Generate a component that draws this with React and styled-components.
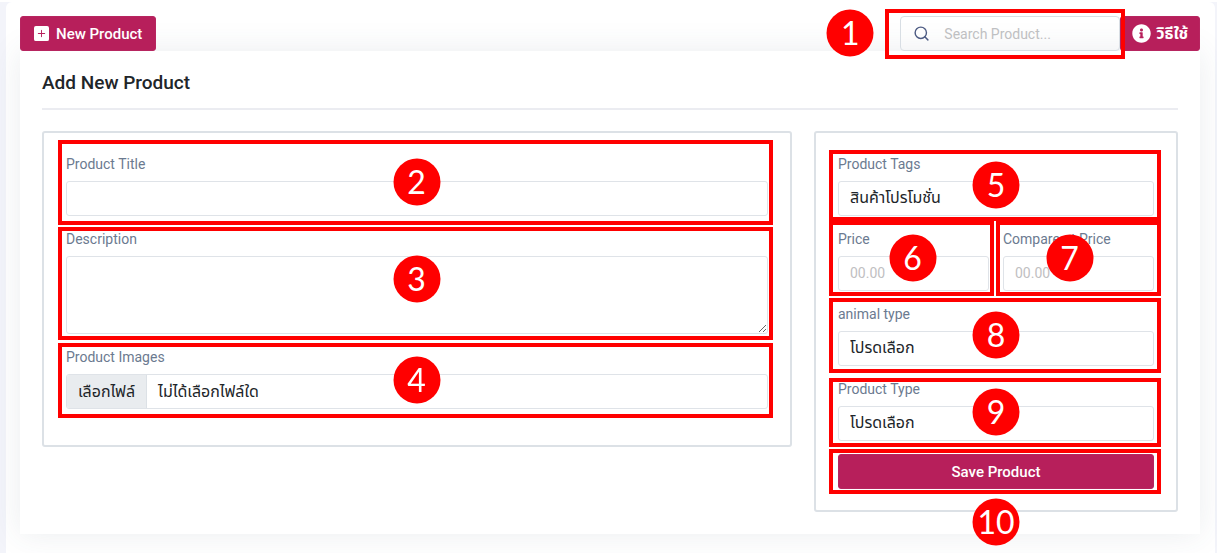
import React from "react";
import styled, { createGlobalStyle } from "styled-components";
import { BsPlusSquareFill } from "react-icons/bs";
import { FaInfoCircle } from "react-icons/fa";
import { FiSearch } from "react-icons/fi";

const GlobalStyle = createGlobalStyle`
  *, *::before, *::after { box-sizing: border-box; }
  body {
    margin: 0;
    background: #fff;
    color: #212529;
    font-family: Roboto, "Noto Sans Thai", "Noto Sans", "DejaVu Sans", sans-serif;
    font-size: 14px;
    line-height: 20px;
  }
  button, input, select, textarea { font: inherit; color: inherit; margin: 0; }
`;

const Page = styled.div`
  display: flex;
  min-height: 100vh;
  padding: 2px 2px 0 6px;
  background: linear-gradient(#fff 2px, #f3f4fa 2px);
`;

const Main = styled.main`
  flex: 1;
  min-width: 0;
  padding: 14px 15px 19px 14px;
  background: #fff;
  border-radius: 6px 6px 0 0;
`;

const Toolbar = styled.header`
  display: flex;
  justify-content: space-between;
`;

const ToolbarEnd = styled.div`
  display: flex;
`;

const Button = styled.button`
  display: flex;
  align-items: center;
  justify-content: center;
  gap: ${(p) => (p.$tight ? 5 : 7)}px;
  width: ${(p) => (p.$block ? "100%" : "auto")};
  height: 35px;
  padding: 0 ${(p) => (p.$tight ? 11 : 13)}px;
  border: 1px solid #b72560;
  border-radius: 3px;
  background: #b71f5b;
  color: #fff;
  font-size: ${(p) => (p.$tight ? 16 : 15)}px;
  font-weight: ${(p) => (p.$tight ? 700 : 500)};
  white-space: nowrap;
  cursor: pointer;
`;

const SearchBox = styled.div`
  position: relative;
  display: flex;
  align-items: center;
  gap: 14px;
  width: 220px;
  height: 35px;
  padding: 0 12px;
  border: 1px solid #d8dee4;
  border-radius: 4px;
  color: #4d5b83;
`;

const SearchInput = styled.input`
  flex: 1;
  min-width: 0;
  padding: 0;
  border: 0;
  outline: 0;
  background: transparent;
  &::placeholder { color: #bfc0c2; opacity: 1; }
`;

const Card = styled.section`
  padding: 22px;
  background: #fff;
  box-shadow: 0 0 30px rgba(60, 80, 100, 0.1);
`;

const Title = styled.h1`
  margin: 0;
  padding-bottom: 15px;
  border-bottom: 2px solid #ebecf1;
  font-size: 19px;
  font-weight: 500;
  line-height: 20px;
`;

const Form = styled.form`
  display: grid;
  grid-template-columns: repeat(12, minmax(0, 1fr));
  gap: 22px;
  align-items: start;
  padding-top: 21px;
`;

const Panel = styled.div`
  grid-column: span ${(p) => p.$span};
  display: flex;
  flex-direction: column;
  gap: 13px;
  padding: 21px 22px ${(p) => (p.$roomy ? 36 : 21)}px;
  border: 2px solid #dce1e6;
  border-radius: 3px;
`;

const PriceRow = styled.div`
  display: grid;
  grid-template-columns: 1fr 1fr;
  gap: 14px;
`;

const FieldBox = styled.div`
  position: relative;
  display: flex;
  flex-direction: column;
  gap: 7px;
  min-width: 0;
`;

const Label = styled.label`
  color: #6b7a90;
  font-size: 14px;
  line-height: 20px;
`;

const Control = styled.input`
  width: 100%;
  height: 35px;
  padding: 0 11px 2px;
  border: 1px solid #dfe3e8;
  border-radius: 3px;
  background: #fff;
  outline: 0;
  appearance: none;
  &::placeholder { color: #bfc0c2; opacity: 1; }
`;

const Select = styled(Control)`
  font-size: 16px;
`;

const TextArea = styled(Control)`
  display: block;
  height: 78px;
  resize: vertical;
`;

const FilePicker = styled.div`
  position: relative;
  display: flex;
  height: 35px;
  border: 1px solid #dfe3e8;
  border-radius: 3px;
  overflow: hidden;
  font-size: 16px;
  line-height: 33px;
`;

const FileButton = styled.span`
  padding: 0 11px;
  border-right: 1px solid #dce1e6;
  background: #e9ecef;
`;

const FileName = styled.span`
  padding: 0 11px;
`;

const FileInput = styled.input`
  position: absolute;
  inset: 0;
  opacity: 0;
  cursor: pointer;
`;

const Anchor = styled.div`
  position: relative;
`;

const Outline = styled.div`
  position: absolute;
  z-index: 1;
  inset: ${(p) => p.$inset};
  border: 4px solid #f00;
  pointer-events: none;
`;

const Badge = styled.span`
  position: absolute;
  left: ${(p) => p.$left};
  top: ${(p) => p.$top};
  transform: translate(-50%, -50%);
  display: flex;
  align-items: center;
  justify-content: center;
  width: 47px;
  height: 47px;
  padding-bottom: 2px;
  border-radius: 50%;
  background: #f00;
  color: #fff;
  font-family: Lato, Roboto, sans-serif;
  font-size: 32px;
  line-height: 45px;
`;

function Callout({ n, inset, left = "calc(50% + 1px)", top = "calc(50% - 1px)" }) {
  return (
    <Outline $inset={inset}>
      <Badge $left={left} $top={top}>{n}</Badge>
    </Outline>
  );
}

function Field({ id, label, children, callout }) {
  return (
    <FieldBox>
      <Label htmlFor={id}>{label}</Label>
      {children}
      <Callout {...callout} />
    </FieldBox>
  );
}

export default function App() {
  return (
    <Page>
      <GlobalStyle />
      <Main>
        <Toolbar>
          <Button type="button">
            <BsPlusSquareFill size={15} />
            New Product
          </Button>
          <ToolbarEnd>
            <SearchBox>
              <FiSearch size={17} />
              <SearchInput type="search" aria-label="Search Product" placeholder="Search Product..." />
              <Callout n={1} inset="-8px -6px -9px -16px" left="-39px" />
            </SearchBox>
            <Button type="button" $tight>
              <FaInfoCircle size={19} />
              วิธีใช้
            </Button>
          </ToolbarEnd>
        </Toolbar>
        <Card>
          <Title>Add New Product</Title>
          <Form onSubmit={(e) => e.preventDefault()}>
            <Panel $span={8} $roomy>
              <Field id="title" label="Product Title" callout={{ n: 2, inset: "-14px -5px -9px -8px" }}>
                <Control id="title" type="text" />
              </Field>
              <Field id="description" label="Description" callout={{ n: 3, inset: "-2px -5px -6px -8px", top: "calc(50% - 5px)" }}>
                <TextArea as="textarea" id="description" />
              </Field>
              <Field id="images" label="Product Images" callout={{ n: 4, inset: "-4px -5px -9px -8px" }}>
                <FilePicker>
                  <FileButton>เลือกไฟล์</FileButton>
                  <FileName>ไม่ได้เลือกไฟล์ใด</FileName>
                  <FileInput id="images" type="file" />
                </FilePicker>
              </Field>
            </Panel>
            <Panel $span={4}>
              <Field id="tags" label="Product Tags" callout={{ n: 5, inset: "-4px -7px -5px -9px" }}>
                <Select as="select" id="tags">
                  <option>สินค้าโปรโมชั่น</option>
                </Select>
              </Field>
              <PriceRow>
                <Field id="price" label="Price" callout={{ n: 6, inset: "-8px -5px -5px -9px" }}>
                  <Control id="price" type="text" placeholder="00.00" />
                </Field>
                <Field id="compare" label="Compare at Price" callout={{ n: 7, inset: "-8px -7px -5px -7px", left: "calc(50% - 9px)" }}>
                  <Control id="compare" type="text" placeholder="00.00" />
                </Field>
              </PriceRow>
              <Field id="animal" label="animal type" callout={{ n: 8, inset: "-6px -7px -7px -9px" }}>
                <Select as="select" id="animal">
                  <option>โปรดเลือก</option>
                </Select>
              </Field>
              <Field id="type" label="Product Type" callout={{ n: 9, inset: "-1px -7px -6px -9px" }}>
                <Select as="select" id="type">
                  <option>โปรดเลือก</option>
                </Select>
              </Field>
              <Anchor>
                <Button type="submit" $block>Save Product</Button>
                <Callout n={10} inset="-5px -7px -5px -9px" top="calc(100% + 32px)" />
              </Anchor>
            </Panel>
          </Form>
        </Card>
      </Main>
    </Page>
  );
}
